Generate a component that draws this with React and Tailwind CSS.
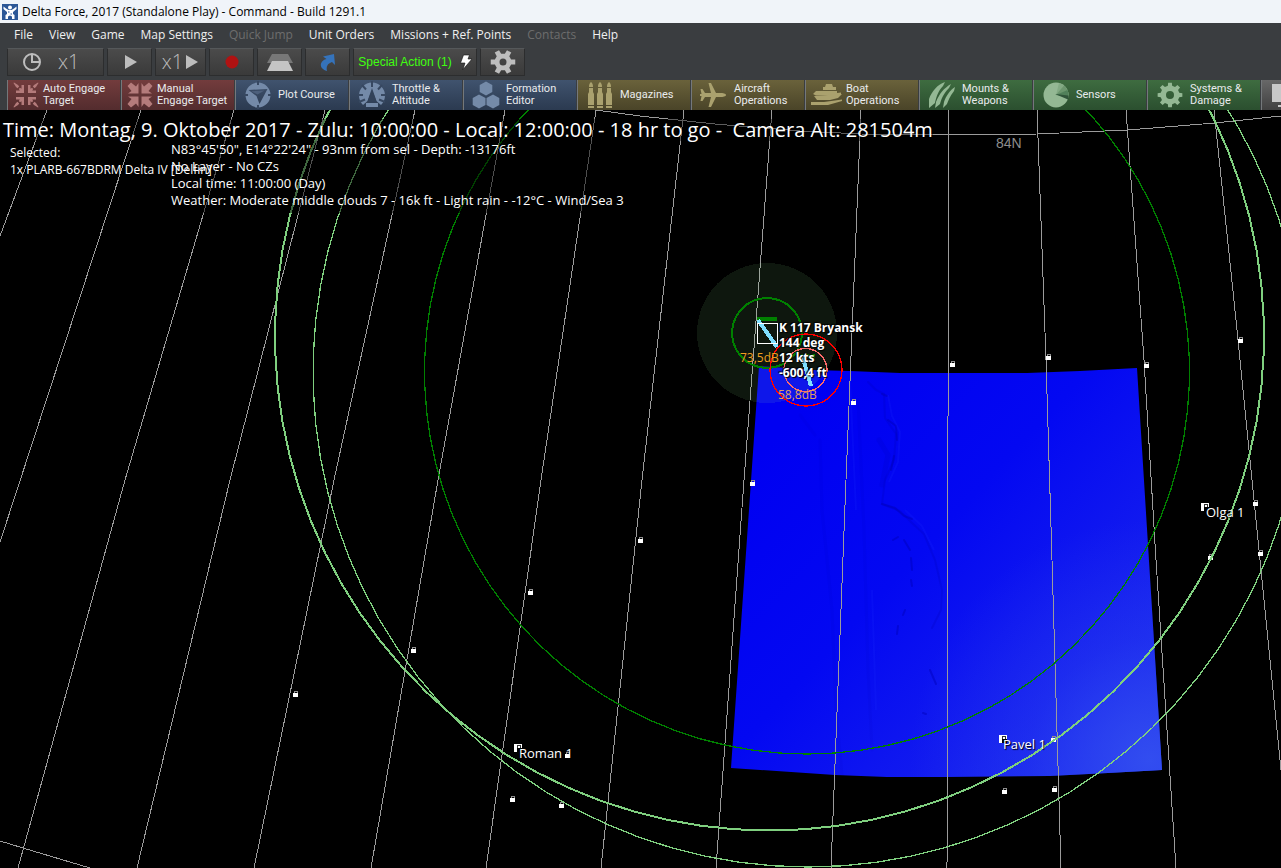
import React from "react";

const meridians = [
  "47,0 0,126",
  "141,0 17,380 0,432",
  "234,0 125,370 18,758",
  "325,0 230,370 137,758",
  "415,0 334,370 254,758",
  "505,0 438,370 371,758",
  "596,0 541,370 486,758",
  "684,0 642,370 601,758",
  "772,0 744,370 716,758",
  "861,0 846,370 831,758",
  "949,0 948,310 947,758",
  "1037,0 1046,250 1052,450 1061,758",
  "1126,0 1144,250 1156,450 1176,758",
  "1214,0 1236,210 1260,450 1281,660",
];

const parallels = [
  "596,0 640,6 715,14 800,21 861,24 949,25 1037,24 1128,20 1215,13 1281,6",
  "0,731 23,738 90,758",
];

const locks = [
  [1240, 230], [952, 254], [1048, 247], [1146, 255], [853, 292], [752, 373],
  [640, 430], [530, 482], [413, 540], [295, 584], [567, 645], [512, 689],
  [561, 695], [1255, 393], [1260, 443], [1210, 447], [1053, 629], [1004, 681],
  [1054, 679],
];

const drones = [[518, 638], [1205, 397], [1003, 629]];

function ringPoints(cx, cy, r, sides = 90) {
  return Array.from({ length: sides }, (_, i) => {
    const a = (i * 2 * Math.PI) / sides;
    return `${(cx + r * Math.sin(a)).toFixed(1)},${(cy - r * Math.cos(a)).toFixed(1)}`;
  }).join(" ");
}

function Icon({ className = "size-7", box = "0 0 28 28", children }) {
  return (
    <svg viewBox={box} className={`shrink-0 ${className}`} fill="currentColor" aria-hidden="true">
      {children}
    </svg>
  );
}

function QuadArrows({ heavy }) {
  return [0, 90, 180, 270].map((a) => (
    <g key={a} transform={`translate(14 14) rotate(${a})`}>
      {heavy ? (
        <path d="M-1.500-1.500V-12L-4-8.500L-9-12.500L-12.500-9L-8.500-4L-12-1.500Z" />
      ) : (
        <>
          <path d="M-2-2V-10H-4.500V-6.200L-6-7.200L-7.200-6L-6.200-4.500H-10V-2Z" />
          <path d="M-8-10L-12-12.500L-12.500-12L-10-8L-8.500-6.800L-6.800-8.500Z" />
        </>
      )}
    </g>
  ));
}

function gearPath(c, teeth, outer, inner) {
  const pts = [];
  const step = (2 * Math.PI) / teeth;
  for (let i = 0; i < teeth; i++) {
    const a = (i + (teeth === 6 ? 0.5 : 0)) * step;
    [[-0.29, inner], [-0.19, outer], [0.19, outer], [0.29, inner]].forEach(([o, r]) => {
      pts.push(`${(c + r * Math.sin(a + o * step)).toFixed(2)} ${(c - r * Math.cos(a + o * step)).toFixed(2)}`);
    });
  }
  return `M${pts.join("L")}Z`;
}

function Gear({ teeth, outer, inner, hole }) {
  return (
    <path
      fillRule="evenodd"
      d={`${gearPath(14, teeth, outer, inner)}M${14 - hole} 14a${hole} ${hole} 0 1 0 ${hole * 2} 0a${hole} ${hole} 0 1 0 ${-hole * 2} 0Z`}
    />
  );
}

const red = "gap-[3px] pl-1 from-[#733c3d] to-[#532c2e] text-[#b47b7b]";
const blue = "gap-1.5 pl-2 from-[#40536e] to-[#2b3a50] text-[#748aa8]";
const olive = "gap-1.5 pl-2 from-[#6a623b] to-[#4a4428] text-[#aaa16e]";
const oliveWide = "gap-1 pl-1 from-[#6a623b] to-[#4a4428] text-[#aaa16e]";
const green = "gap-1.5 pl-2 from-[#3e6c40] to-[#2b4f2f] text-[#94b894]";

const actions = [
  { lines: ["Auto Engage", "Target"], tone: red, icon: <QuadArrows /> },
  { lines: ["Manual", "Engage Target"], tone: red, icon: <QuadArrows heavy /> },
  {
    lines: ["Plot Course"], tone: blue,
    icon: (
      <>
        <path fillRule="evenodd" d="M14 1.500a12.500 12.500 0 1 0 0 25a12.500 12.500 0 1 0 0-25ZM4.500 9L23.500 8L15.500 23L12.500 15Z" />
        <path d="M14 0V4M14 24V28M0 14H4M24 14H28" stroke="#374861" strokeWidth="2" />
        <path d="M7 10.200L20.500 9.500L13.500 13.500Z" fill="#4d607c" />
      </>
    ),
  },
  {
    lines: ["Throttle &", "Altitude"], tone: blue,
    icon: (
      <>
        <path d="M5 24A13 13 0 1 1 23 24L18.500 20L14 7L9.500 20Z" />
        <path d="M14 0V6M4 4L8 8.500M24 4L20 8.500M0 14H5M28 14H23M1 21L7 18.500M27 21L21 18.500" stroke="#374861" strokeWidth="2" />
        <path d="M14 9L9.500 20.500H18.500Z" fill="#324259" />
        <rect x="8" y="22" width="12" height="4" />
      </>
    ),
  },
  {
    lines: ["Formation", "Editor"], tone: blue,
    icon: (
      <path d="M14 0.500L20.300 4V11L14 14.500L7.700 11V4ZM7 13.500L13.500 17V24L7 27.500L0.700 24V17ZM21 13.500L27.300 17V24L21 27.500L14.500 24V17Z" />
    ),
  },
  {
    lines: ["Magazines"], tone: olive,
    icon: [2, 11, 20].map((x) => (
      <g key={x} transform={`translate(${x} 0)`}>
        <path d="M3 1C4.600 2 5 4 5 6H1C1 4 1.400 2 3 1Z" />
        <path d="M1 7H5V11L6 13V24H0V13L1 11Z" />
        <rect y="25" width="6" height="2" />
      </g>
    )),
  },
  {
    lines: ["Aircraft", "Operations"], tone: olive,
    icon: (
      <path transform="translate(-1 0)" d="M27 14C27 12.500 24 12 21 12H17L12 2H9.500L12 12H6L3.500 8H1.500L2.500 13H1V15H2.500L1.500 20H3.500L6 16H12L9.500 26H12L17 16H21C24 16 27 15.500 27 14Z" />
    ),
  },
  {
    lines: ["Boat", "Operations"], tone: oliveWide, wide: true,
    icon: (
      <>
        <path d="M13 5H15L16 2H22L23 5H26V8H13Z" />
        <path d="M6 9H27V11L31 10.500V13L6 13.500L3 12Z" />
        <path d="M4 14L32 12L28 16L20 18H7Z" />
        <path d="M1 20H14L32 17.500V19L18 23H1Z" />
      </>
    ),
  },
  {
    lines: ["Mounts &", "Weapons"], tone: green,
    icon: (
      <>
        <path d="M1 27V18C4 10 9 4 17 1L15 5C10 10 8 17 7 22Z" />
        <path d="M7 27L8 21C11 13 16 7 23 3L21 7C15 13 13 19 12 23Z" />
        <path d="M15 27L16 21C18 15 22 9 27 6L26 10C22 15 20 20 19 23Z" />
      </>
    ),
  },
  {
    lines: ["Sensors"], tone: green,
    icon: (
      <>
        <circle cx="14" cy="14" r="12.500" />
        <path d="M14 14L17 1.900A12.500 12.500 0 0 1 26.400 15Z" fill="#83aa84" />
        <path d="M14 14L22 4.400A12.500 12.500 0 0 1 26.400 15Z" fill="#6c966e" />
        <path d="M14 14L25.500 9A12.500 12.500 0 0 1 26.400 15Z" fill="#51805a" />
        <path d="M13 13L26.500 14.500L26 18.500Z" fill="#30543a" />
      </>
    ),
  },
  { lines: ["Systems &", "Damage"], tone: green, icon: <Gear teeth={8} outer={12.5} inner={9.5} hole={4} /> },
];

function ActionButton({ lines, tone, icon, wide }) {
  return (
    <button
      type="button"
      className={`flex h-[30px] w-[113px] shrink-0 items-center overflow-hidden border-l border-[#74787b] bg-linear-to-b text-left ${tone}`}
    >
      <Icon className={wide ? "h-7 w-8" : "size-7"} box={wide ? "0 -1 32 28" : "0 0 28 28"}>{icon}</Icon>
      <span className="flex flex-col font-[Roboto,sans-serif] text-[11px] leading-3 whitespace-nowrap text-[#e9ebed]">
        {lines.map((l) => <span key={l}>{l}</span>)}
      </span>
    </button>
  );
}

function Tool({ width, label, children }) {
  return (
    <button
      type="button"
      aria-label={label}
      className={`flex h-7 shrink-0 items-center justify-center border border-[#2c2d2e] border-t-[#55585a] bg-linear-to-b from-[#4b4b4b] to-[#3a3a3a] text-[#bdbdbd] ${width}`}
    >
      {children}
    </button>
  );
}

const menu = [
  ["File"], ["View"], ["Game"], ["Map Settings"], ["Quick Jump", true],
  ["Unit Orders"], ["Missions + Ref. Points"], ["Contacts", true], ["Help"],
];

function Lock({ x, y }) {
  return (
    <g transform={`translate(${x} ${y})`}>
      <path d="M-1-1V-3H2V-1" fill="none" stroke="#909090" />
      <rect x="-2" y="-1" width="5" height="4" fill="#fff" />
    </g>
  );
}

function MapDrawing() {
  return (
    <svg className="absolute inset-0 size-full" shapeRendering="crispEdges" aria-hidden="true">
      <defs>
        <linearGradient id="sea" x1="0.100" y1="0.200" x2="1" y2="1">
          <stop offset="0" stopColor="#0000f2" />
          <stop offset="0.350" stopColor="#0308f2" />
          <stop offset="0.650" stopColor="#121bef" />
          <stop offset="1" stopColor="#2338ee" />
        </linearGradient>
        <radialGradient id="shoal" gradientUnits="userSpaceOnUse" cx="1150" cy="650" r="240">
          <stop offset="0" stopColor="#3450f0" stopOpacity="0.900" />
          <stop offset="0.500" stopColor="#3048f0" stopOpacity="0.300" />
          <stop offset="1" stopColor="#3048f0" stopOpacity="0" />
        </radialGradient>
        <clipPath id="seaClip">
          <path d="M759 256L813 260L850 261L900 263H1027L1080 261L1137 258L1162 660L1108 663L1050 666L945 667H887L835 665L731 658Z" />
        </clipPath>
      </defs>

      <g clipPath="url(#seaClip)">
        <rect x="720" y="250" width="450" height="430" fill="url(#sea)" />
        <rect x="720" y="250" width="450" height="430" fill="url(#shoal)" />
        <g fill="none" stroke="#0000b8" strokeLinecap="round" shapeRendering="auto">
          <path d="M868 272L876 280L884 284L885 308L896 324L894 350L885 370L882 394L900 401L912 413L924 424L935 450L942 480L941 500L932 518" strokeOpacity="0.220" strokeWidth="2" />
          <path d="M882 284L887 286M888 310L896 316L897 330M894 346L891 360M882 394L895 398L904 406L912 409M893 430L898 427M904 430L910 440M911 448L912 460M911 470L912 476M905 500L903 505M898 516L897 524M930 560L936 574M923 603L926 604" strokeOpacity="0.450" strokeWidth="2" />
          <path d="M820 330L822 400L827 450L832 500L836 600L842 665M858 290L864 420L868 560L872 640M800 305L815 325" strokeOpacity="0.080" strokeWidth="3" />
          <path d="M879 330L888 345L882 375" strokeOpacity="0.150" strokeWidth="5" />
        </g>
        <g fill="none" stroke="#2233ff" shapeRendering="auto" strokeOpacity="0.150" strokeWidth="2">
          <path d="M888 285L892 306L900 322L898 352L889 372M905 400L922 416L934 440M850 270L856 400M872 480L876 600" />
        </g>
      </g>

      <g fill="none" stroke="#9b9b9b">
        {meridians.concat(parallels).map((p) => <polyline key={p} points={p} />)}
      </g>

      {locks.map(([x, y]) => <Lock key={`${x}-${y}`} x={x} y={y} />)}

      <circle cx="767" cy="223" r="70" fill="#a0ffa0" fillOpacity="0.090" />
      <g fill="none">
        <polygon points={ringPoints(807, 261.5, 382.5)} stroke="#008000" strokeWidth="1.300" />
        <polygon points={ringPoints(808, 262, 495)} stroke="#7fcf7f" strokeWidth="1.300" />
        <polygon points={ringPoints(769.5, 226, 494.5)} stroke="#7fcf7f" strokeWidth="2" />
        <polygon points={ringPoints(767, 223, 35, 30)} stroke="#008000" strokeWidth="2" />
        <polygon points={ringPoints(806, 260, 36, 36)} stroke="#ff0000" strokeWidth="1.300" />
        <polygon points={ringPoints(805.5, 260, 21.5, 30)} stroke="#ff6b6b" strokeWidth="1.300" />
      </g>

      <path d="M757 207H777V211H757ZM800 244H815V248H800Z" fill="#008000" />
      <path d="M758 210L777 237" stroke="#7fdfff" strokeWidth="4" fill="none" />
      <path d="M802 245L811 276" stroke="#7fdfff" strokeWidth="4" fill="none" />
      <rect x="757.500" y="213.500" width="20" height="20" fill="none" stroke="#fff" />

      {drones.map(([x, y]) => (
        <g key={x}>
          <rect x={x - 4} y={y - 4} width="8" height="8" fill="#fff" />
          <rect x={x - 1} y={y} width="5" height="4" fill="#000" />
          <path d={`M${x - 0.5} ${y}V${y - 2.5}H${x + 2.5}V${y}`} stroke="#333" fill="none" />
        </g>
      ))}
    </svg>
  );
}

export default function App() {
  return (
    <div className="flex min-h-screen flex-col overflow-hidden bg-black font-['Open_Sans','Noto_Sans',sans-serif] text-white">
      <header className="flex h-[23px] items-center gap-1 bg-[#f0f4f9] pl-0.5 text-xs text-black">
        <Icon className="size-4" box="0 0 16 16">
          <rect width="16" height="16" fill="#2c5796" />
          <circle cx="8" cy="3.500" r="2" fill="#fff" />
          <path d="M1.500 2.500L4 4.500L6.500 6H9.500L12 4.500L14.500 2.500V5L11 8V10L12.500 11V15H10V12.500L8 11.500L6 12.500V15H3.500V11L5 10V8L1.500 5Z" fill="#fff" />
          <path d="M6 8H7.500M8.500 10H10" stroke="#2c5796" />
        </Icon>
        <h1>Delta Force, 2017 (Standalone Play) - Command - Build 1291.1</h1>
      </header>

      <div className="flex h-[87px] flex-col bg-[#3a3d40]">
        <nav className="flex h-6 items-center gap-4 pl-3.5 text-xs">
          {menu.map(([label, disabled]) => (
            <button key={label} type="button" disabled={disabled} className="whitespace-nowrap text-[#f0f0f0] disabled:text-[#6d6d6d]">
              {label}
            </button>
          ))}
        </nav>

        <div className="flex h-[33px] items-start gap-[3px] pt-px pl-[7px]">
          <Tool width="w-[97px]" label="Time compression">
            <span className="flex grow items-center gap-4 pl-3.5">
              <Icon className="size-5" box="0 0 20 20">
                <circle cx="10" cy="10" r="8" fill="none" stroke="currentColor" strokeWidth="2" />
                <path d="M10 3V10H17" fill="none" stroke="currentColor" strokeWidth="2" />
              </Icon>
              <span className="text-xl leading-6 font-light">x1</span>
            </span>
          </Tool>
          <Tool width="w-[45px]" label="Play">
            <Icon className="size-4" box="0 0 16 16"><path d="M3 1L15 8L3 15Z" /></Icon>
          </Tool>
          <Tool width="w-[51px]" label="Step">
            <span className="text-xl leading-6 font-light">x1</span>
            <Icon className="size-4" box="0 0 16 16"><path d="M3 1L15 8L3 15Z" /></Icon>
          </Tool>
          <Tool width="w-[45px]" label="Record">
            <Icon className="size-4" box="0 0 16 16"><circle cx="8" cy="8" r="6.500" fill="#b01212" /></Icon>
          </Tool>
          <Tool width="w-[45px]" label="Layers">
            <Icon>
              <path d="M6 6H22L27 15H1Z" fill="#777" />
              <path d="M6 13H22L27 23H1Z" fill="#c4c4c4" />
            </Icon>
          </Tool>
          <Tool width="w-[45px]" label="Jump">
            <Icon className="size-5" box="0 0 20 20">
              <path d="M5 4.500L16 2L17 13L14 10C9.500 11.500 8 14.500 9 19C5 18 2 15 3 11.500C4 9 6 7.500 8.500 7Z" fill="#3573bb" />
            </Icon>
          </Tool>
          <Tool width="w-[124px]" label="Special Action (1)">
            <span className="font-['Liberation_Sans',Arial,sans-serif] text-xs whitespace-nowrap text-[#40ff10]">Special Action (1)</span>
            <Icon className="ml-2 h-4 w-3" box="0 0 12 16">
              <path d="M3.500 1H9.500L8 5H12L3 15.500L5 9H0.500Z" fill="#fff" stroke="#111" strokeWidth="0.600" />
            </Icon>
          </Tool>
          <Tool width="w-[45px]" label="Settings">
            <Icon className="size-7"><Gear teeth={6} outer={12.5} inner={8.5} hole={3.5} /></Icon>
          </Tool>
        </div>

        <div className="flex gap-px overflow-hidden pl-[7px]">
          {actions.map((a) => <ActionButton key={a.lines.join(" ")} {...a} />)}
          <button type="button" aria-label="Display" className="flex h-[30px] w-[113px] shrink-0 items-center border-l border-[#74787b] bg-linear-to-b from-[#686868] to-[#414141] pl-2.5 text-[#c8c8c8]">
            <Icon><path d="M0 3H28V21H0ZM6 24H22V26H6Z" /></Icon>
          </button>
        </div>
      </div>

      <main className="relative flex-1 overflow-hidden text-[13px] leading-[17px] whitespace-nowrap">
        <MapDrawing />

        <p className="absolute top-[9px] left-[3px] bg-black/40 text-xl leading-[22px] whitespace-pre">
          Time: Montag, 9. Oktober 2017 - Zulu: 10:00:00 - Local: 12:00:00 - 18 hr to go -  Camera Alt: 281504m
        </p>
        <div className="absolute top-[31px] left-[168px] bg-black/50 px-[3px] pb-1">
          <p>N83°45'50", E14°22'24" - 93nm from sel - Depth: -13176ft</p>
          <p>No Layer - No CZs</p>
          <p>Local time: 11:00:00 (Day)</p>
          <p>Weather: Moderate middle clouds 7 - 16k ft - Light rain - -12°C - Wind/Sea 3</p>
        </div>
        <div className="absolute top-[34px] left-2.5 text-xs leading-[17px]">
          <p>Selected:</p>
          <p>1x PLARB-667BDRM Delta IV [Delfin]</p>
        </div>

        <span className="absolute top-[23px] left-[996px] font-['Liberation_Sans',Arial,sans-serif] text-sm text-[#8d8d8d]">84N</span>

        <span className="absolute top-[240px] left-[740px] text-xs leading-4 text-[#f0a020]">73,5dB</span>
        <span className="absolute top-[277px] left-[778px] text-xs leading-4 text-[#e0a060]">58,8dB</span>
        <div className="absolute top-[210px] left-[779px] text-xs leading-[15px] font-bold [text-shadow:1px_1px_1px_black,-1px_-1px_1px_black]">
          <p>K 117 Bryansk</p>
          <p>144 deg</p>
          <p>12 kts</p>
          <p>-600,4 ft</p>
        </div>

        <span className="absolute top-[635px] left-[519px] [text-shadow:1px_1px_1px_black]">Roman 1</span>
        <span className="absolute top-[394px] left-[1206px] [text-shadow:1px_1px_1px_black]">Olga 1</span>
        <span className="absolute top-[626px] left-[1003px] [text-shadow:1px_1px_1px_black]">Pavel 1</span>
      </main>
    </div>
  );
}
